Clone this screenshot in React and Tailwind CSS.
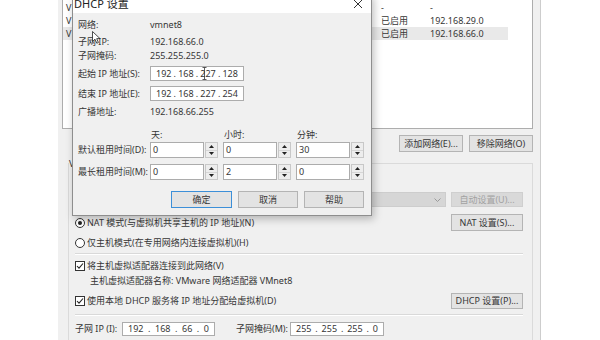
import React from "react";

const font = "font-['Noto_Sans','Noto_Sans_CJK_SC',sans-serif]";

function Btn({ children, w = "w-[64px]", h = "h-[17px]", disabled, primary }) {
  return (
    <div
      className={`${w} ${h} flex items-center justify-center border ${
        primary ? "border-[#3c8fd8]" : "border-[#b4b4b4]"
      } ${disabled ? "bg-[#d9d9d9] text-[#a2a2a2] border-[#cfcfcf]" : "bg-[#e3e3e3]"}`}
    >
      {children}
    </div>
  );
}

function IpBox({ parts, w = "w-[94px]", h = "h-[15px]" }) {
  return (
    <div className={`${w} ${h} bg-white border border-[#acacac] flex items-center px-[5px] justify-between`}>
      {parts.map((p, i) => (
        <React.Fragment key={i}>
          {i > 0 && <span>.</span>}
          <span>{p}</span>
        </React.Fragment>
      ))}
    </div>
  );
}

function Spin({ value }) {
  return (
    <div className="flex h-[16px] w-[68px] gap-[1px]">
      <div className="flex-1 bg-white border border-[#acacac] px-[2px] flex items-center">{value}</div>
      <div className="w-[13px] flex flex-col border border-[#c8c8c8] bg-[#ededed]">
        <div className="flex-1 flex items-center justify-center border-b border-[#d6d6d6]">
          <svg width="5" height="3" viewBox="0 0 5 3">
            <path d="M0 3 L2.5 0 L5 3 Z" fill="#222" />
          </svg>
        </div>
        <div className="flex-1 flex items-center justify-center">
          <svg width="5" height="3" viewBox="0 0 5 3">
            <path d="M0 0 L2.5 3 L5 0 Z" fill="#222" />
          </svg>
        </div>
      </div>
    </div>
  );
}

function Radio({ checked }) {
  return (
    <div className="w-[10px] h-[10px] rounded-full border border-[#333] bg-white flex items-center justify-center mr-[2px]">
      {checked && <div className="w-[4px] h-[4px] rounded-full bg-[#222]" />}
    </div>
  );
}

function Check() {
  return (
    <div className="w-[10px] h-[10px] border border-[#333] bg-white flex items-center justify-center mr-[2px]">
      <svg width="8" height="8" viewBox="0 0 8 8">
        <path d="M1 4 L3 6.2 L7 1.5" stroke="#222" strokeWidth="1.1" fill="none" />
      </svg>
    </div>
  );
}

// only the first letter of each name peeks out from behind the dialog
const networks = [
  { name: "V", dhcp: "-", subnet: "-" },
  { name: "V", dhcp: "已启用", subnet: "192.168.29.0" },
  { name: "V", dhcp: "已启用", subnet: "192.168.66.0", selected: true },
];

function DhcpDialog() {
  return (
    <div className="absolute left-[72px] top-[-6px] w-[300px] h-[222px] bg-[#f0f0f0] border border-[#8e8e8e] shadow-[2px_3px_8px_rgba(0,0,0,0.25)]">
      <div className="h-[18px] bg-white flex items-center justify-between pl-[1px] pr-[8px]">
        <span className="text-[11px] text-[#222]">DHCP 设置</span>
        <svg width="10" height="10" viewBox="0 0 10 10">
          <path d="M1 1 L9 9 M9 1 L1 9" stroke="#333" strokeWidth="1" />
        </svg>
      </div>
      <div className="pl-[5px] pr-[7px]">
        <div className="mt-[5px] h-[14px] flex items-center">
          <span className="w-[72px]">网络:</span>
          <span>vmnet8</span>
        </div>
        <div className="mt-[3px] h-[14px] flex items-center">
          <span className="w-[72px]">子网 IP:</span>
          <span>192.168.66.0</span>
        </div>
        <div className="h-[14px] flex items-center">
          <span className="w-[72px]">子网掩码:</span>
          <span>255.255.255.0</span>
        </div>
        <div className="mt-[3px] h-[15px] flex items-center">
          <span className="w-[72px]">起始 IP 地址(S):</span>
          <IpBox parts={["192", "168", "227", "128"]} />
        </div>
        <div className="mt-[5px] h-[15px] flex items-center">
          <span className="w-[72px]">结束 IP 地址(E):</span>
          <IpBox parts={["192", "168", "227", "254"]} />
        </div>
        <div className="mt-[4px] h-[14px] flex items-center">
          <span className="w-[72px]">广播地址:</span>
          <span>192.168.66.255</span>
        </div>
        <div className="mt-[9px] h-[14px] flex items-center pl-[73px]">
          <span className="w-[73px]">天:</span>
          <span className="w-[73px]">小时:</span>
          <span>分钟:</span>
        </div>
        <div className="h-[16px] flex items-center">
          <span className="w-[72px]">默认租用时间(D):</span>
          <div className="flex gap-[5px]">
            <Spin value="0" />
            <Spin value="0" />
            <Spin value="30" />
          </div>
        </div>
        <div className="mt-[6px] h-[16px] flex items-center">
          <span className="w-[72px]">最长租用时间(M):</span>
          <div className="flex gap-[5px]">
            <Spin value="0" />
            <Spin value="2" />
            <Spin value="0" />
          </div>
        </div>
        <div className="mt-[11px] flex justify-end gap-[6px]">
          <Btn w="w-[61px]" primary>确定</Btn>
          <Btn w="w-[60px]">取消</Btn>
          <Btn w="w-[60px]">帮助</Btn>
        </div>
      </div>
    </div>
  );
}

export default function App() {
  return (
    <div className={`relative w-[600px] h-[340px] overflow-hidden bg-white text-[9px] text-[#363636] ${font}`}>
      {/* Virtual network editor (background) */}
      <div className="ml-[58px] w-[483px] h-full bg-[#f0f0f0] border-r border-[#cdcdcd] pl-[4px] pr-[7px]">
        <div className="h-[129px] bg-white border border-t-0 border-[#adadad] pt-[1px]">
          {networks.map((n, i) => (
            <div
              key={i}
              className={`flex h-[13px] items-center w-[445px] ${n.selected ? "bg-[#e9e9e9]" : ""}`}
            >
              <span className="w-[318px] pl-[3px]">{n.name}</span>
              <span className="w-[49px]">{n.dhcp}</span>
              <span>{n.subnet}</span>
            </div>
          ))}
        </div>

        <div className="mt-[6px] flex justify-end gap-[6px]">
          <Btn>添加网络(E)...</Btn>
          <Btn>移除网络(O)</Btn>
        </div>

        <div className="relative mt-[11px] ml-[6px] border border-[#dadada] pl-[6px] pr-[9px] pb-[20px]">
          <span className="absolute top-[-7px] left-[0px] bg-[#f0f0f0] pr-[2px]">V</span>

          <div className="mt-[28px] h-[15px] flex gap-[5px]">
            <div className="ml-[75px] flex-1 bg-[#d6d6d6] border border-[#cdcdcd] flex items-center justify-end pr-[4px]">
              <svg width="7" height="4" viewBox="0 0 7 4">
                <path d="M0.5 0.5 L3.5 3.5 L6.5 0.5" stroke="#9a9a9a" fill="none" />
              </svg>
            </div>
            <Btn w="w-[72px]" h="h-[15px]" disabled>自动设置(U)...</Btn>
          </div>

          <div className="mt-[7px] h-[17px] flex items-center justify-between">
            <div className="flex items-center">
              <Radio checked />
              <span>NAT 模式(与虚拟机共享主机的 IP 地址)(N)</span>
            </div>
            <Btn w="w-[72px]">NAT 设置(S)...</Btn>
          </div>

          <div className="mt-[5px] h-[14px] flex items-center">
            <Radio />
            <span>仅主机模式(在专用网络内连接虚拟机)(H)</span>
          </div>

          <div className="mt-[3px] h-[2px] border-t border-[#d9d9d9] border-b border-b-white" />

          <div className="mt-[4px] h-[14px] flex items-center">
            <Check />
            <span>将主机虚拟适配器连接到此网络(V)</span>
          </div>
          <div className="mt-[1px] h-[14px] flex items-center pl-[15px]">
            主机虚拟适配器名称: VMware 网络适配器 VMnet8
          </div>

          <div className="mt-[5px] h-[16px] flex items-center justify-between">
            <div className="flex items-center">
              <Check />
              <span>使用本地 DHCP 服务将 IP 地址分配给虚拟机(D)</span>
            </div>
            <Btn w="w-[72px]" h="h-[16px]">DHCP 设置(P)...</Btn>
          </div>

          <div className="mt-[5px] h-[2px] border-t border-[#d9d9d9] border-b border-b-white" />

          <div className="mt-[6px] h-[14px] flex items-center">
            <span className="w-[47px]">子网 IP (I):</span>
            <IpBox parts={["192", "168", "66", "0"]} w="w-[93px]" h="h-[14px]" />
            <span className="ml-[21px] w-[54px]">子网掩码(M):</span>
            <IpBox parts={["255", "255", "255", "0"]} w="w-[94px]" h="h-[14px]" />
          </div>
        </div>
      </div>

      <DhcpDialog />

      {/* mouse pointer and text cursor */}
      <svg className="absolute left-[92px] top-[31px]" width="9" height="13" viewBox="0 0 9 13">
        <path d="M0.5 0.5 L0.5 10.5 L3 8.2 L4.8 12.2 L6.4 11.5 L4.7 7.6 L8 7.6 Z" fill="white" stroke="#222" strokeWidth="0.8" />
      </svg>
      <svg className="absolute left-[202px] top-[67px]" width="5" height="13" viewBox="0 0 5 13">
        <path d="M0.5 0.5 L4.5 0.5 M2.5 0.5 L2.5 12.5 M0.5 12.5 L4.5 12.5" stroke="#333" strokeWidth="0.8" fill="none" />
      </svg>
    </div>
  );
}
